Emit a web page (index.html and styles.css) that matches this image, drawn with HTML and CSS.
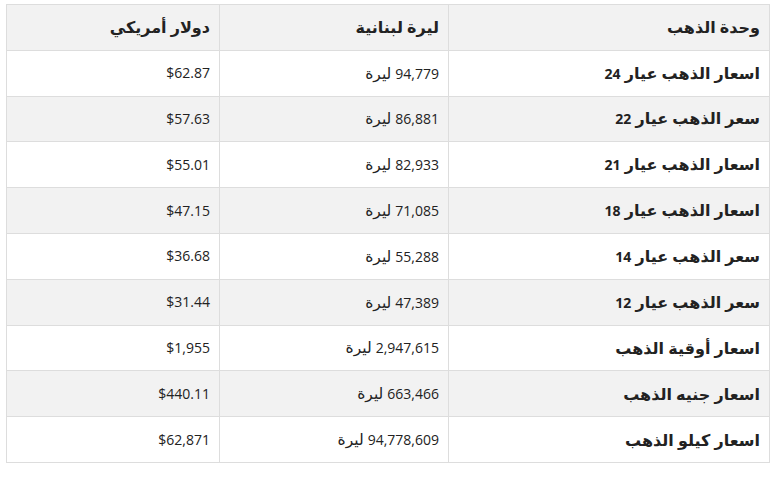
FILE: index.html
```html
<!DOCTYPE html>
<html lang="ar" dir="rtl">
<head>
<meta charset="utf-8">
<link rel="stylesheet" href="styles.css">
</head>
<body>
<table class="prices">
  <thead>
    <tr><th>وحدة الذهب</th><th>ليرة لبنانية</th><th>دولار أمريكي</th></tr>
  </thead>
  <tbody>
    <tr><td class="name">اسعار الذهب عيار <span class="num">24</span></td><td><span class="num">94,779</span> ليرة</td><td class="usd">$62.87</td></tr>
    <tr><td class="name">سعر الذهب عيار <span class="num">22</span></td><td><span class="num">86,881</span> ليرة</td><td class="usd">$57.63</td></tr>
    <tr><td class="name">اسعار الذهب عيار <span class="num">21</span></td><td><span class="num">82,933</span> ليرة</td><td class="usd">$55.01</td></tr>
    <tr><td class="name">اسعار الذهب عيار <span class="num">18</span></td><td><span class="num">71,085</span> ليرة</td><td class="usd">$47.15</td></tr>
    <tr><td class="name">سعر الذهب عيار <span class="num">14</span></td><td><span class="num">55,288</span> ليرة</td><td class="usd">$36.68</td></tr>
    <tr><td class="name">سعر الذهب عيار <span class="num">12</span></td><td><span class="num">47,389</span> ليرة</td><td class="usd">$31.44</td></tr>
    <tr><td class="name">اسعار أوقية الذهب</td><td><span class="num">2,947,615</span> ليرة</td><td class="usd">$1,955</td></tr>
    <tr><td class="name">اسعار جنيه الذهب</td><td><span class="num">663,466</span> ليرة</td><td class="usd">$440.11</td></tr>
    <tr><td class="name">اسعار كيلو الذهب</td><td><span class="num">94,778,609</span> ليرة</td><td class="usd">$62,871</td></tr>
  </tbody>
</table>
</body>
</html>
```
FILE: styles.css
```css
html, body {
  margin: 0;
  padding: 0;
  background: #ffffff;
}
body {
  padding: 4px 7px 0 6px;
  font-family: "Open Sans", "DejaVu Sans", sans-serif;
  font-size: 16px;
  color: #222222;
}
.prices {
  width: 764px;
  border-collapse: collapse;
  table-layout: fixed;
}
.prices th, .prices td {
  border: 1px solid #dddddd;
  height: 44.8px;
  padding: 0 9px;
  text-align: right;
  vertical-align: middle;
  line-height: 20px;
  font-size: 15.5px;
}
.prices th:nth-child(1), .prices td:nth-child(1) { width: 302px; }
.prices th:nth-child(2), .prices td:nth-child(2) { width: 210px; }
.prices th {
  background: #f2f2f2;
  font-weight: bold;
  font-size: 16px;
}
.prices tbody tr:nth-child(even) td {
  background: #f2f2f2;
}
.prices td.name {
  font-weight: bold;
  font-size: 16px;
}
.prices .num, .prices td.usd {
  font-size: 14px;
}
```
